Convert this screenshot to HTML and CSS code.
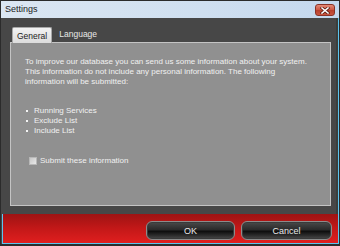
FILE: index.html
```html
<!DOCTYPE html>
<html>
<head>
<meta charset="utf-8">
<link rel="stylesheet" href="styles.css">
</head>
<body>
<div class="window">
  <div class="titlebar">
    <span class="title">Settings</span>
    <button class="close" aria-label="Close">
      <svg width="10" height="7" viewBox="0 0 10 7"><path d="M2 1 L8 6 M8 1 L2 6" stroke="#5a1a10" stroke-width="3" stroke-linecap="square"/><path d="M2 1 L8 6 M8 1 L2 6" stroke="#ffffff" stroke-width="1.6" stroke-linecap="square"/></svg>
    </button>
  </div>
  <div class="main">
    <div class="tabs">
      <div class="tab active">General</div>
      <div class="tab">Language</div>
    </div>
    <div class="panel">
      <p class="intro">To improve our database you can send us some information about your system. This information do not include any personal information. The following information will be submitted:</p>
      <ul class="items">
        <li>Running Services</li>
        <li>Exclude List</li>
        <li>Include List</li>
      </ul>
      <label class="check"><span class="box"></span>Submit these information</label>
    </div>
  </div>
  <div class="footer">
    <button class="btn ok">OK</button>
    <button class="btn cancel">Cancel</button>
  </div>
</div>
</body>
</html>
```
FILE: styles.css
```css
html, body {
  margin: 0;
  padding: 0;
  background: #2b2b2b;
}
.window {
  width: 340px;
  height: 246px;
  box-sizing: border-box;
  border: 1px solid #2b2b2b;
  border-bottom-width: 2px;
  background: #474747;
  display: flex;
  flex-direction: column;
  font-family: "Liberation Sans", Arial, sans-serif;
}
.titlebar {
  height: 17px;
  flex: none;
  display: flex;
  align-items: center;
  justify-content: space-between;
  background: linear-gradient(to right, #dbe6f2 0%, #cfdff0 60%, #c4d8ee 100%);
  border-bottom: 0;
}
.title {
  font-size: 9px;
  color: #1c1c1c;
  padding-left: 4px;
  line-height: 17px;
}
.close {
  width: 20px;
  height: 12px;
  margin-right: 4px;
  margin-top: 1px;
  padding: 0;
  border: 1px solid #8a3226;
  border-radius: 3px;
  background: linear-gradient(to bottom, #e38a78 0%, #cf5a45 45%, #b8402d 55%, #c8553f 100%);
  display: flex;
  align-items: center;
  justify-content: center;
  box-sizing: border-box;
}
.close svg { display: block; }
.main {
  height: 196px;
  flex: none;
  box-sizing: border-box;
  padding: 9px 7px 8px 9px;
  border-right: 1px solid #5cc3ee;
  display: flex;
  flex-direction: column;
  box-shadow: inset -2px 0 0 #3b3e3b;
}
.tabs {
  display: flex;
  height: 15px;
  flex: none;
  padding-left: 2px;
  align-items: stretch;
}
.tab {
  font-size: 8.5px;
  line-height: 15px;
  color: #e8e8e8;
  padding: 0 4px;
}
.tab.active {
  color: #222;
  background: linear-gradient(to bottom, #f2f2f2 0%, #dcdcdc 100%);
  border: 1px solid #a8a8a8;
  border-bottom: 0;
  border-radius: 2px 2px 0 0;
  line-height: 16px;
  margin-bottom: -1px;
  position: relative;
  z-index: 1;
  margin-right: 3px;
}
.panel {
  flex: 1;
  background: #909090;
  border: 1px solid #c4c4c4;
  box-sizing: border-box;
  padding: 14px 14px 0 14px;
  color: #f0f0f0;
  font-size: 8px;
  line-height: 10px;
}
.intro {
  margin: 0;
  width: 290px;
}
.items {
  list-style: none;
  margin: 19px 0 0 0;
  padding: 0;
}
.items li {
  display: flex;
  align-items: center;
  height: 10px;
}
.items li::before {
  content: "";
  width: 2px;
  height: 2px;
  background: #f4f4f4;
  margin-left: 1px;
  margin-right: 6px;
}
.check {
  display: flex;
  align-items: center;
  margin-top: 20px;
  height: 10px;
}
.box {
  width: 8px;
  height: 8px;
  box-sizing: border-box;
  border: 1px solid #b8b8b8;
  background: linear-gradient(135deg, #c8c8c8, #e8e8e8);
  margin-left: 4px;
  margin-right: 3px;
}
.footer {
  flex: 1;
  margin-left: 1px;
  border-left: 1px solid #5cc3ee;
  border-right: 1px solid #5cc3ee;
  border-bottom: 1px solid #5cc3ee;
  background: linear-gradient(to bottom, #9e1313 0%, #c31818 50%, #e01f1f 100%);
  display: flex;
  justify-content: flex-end;
  align-items: flex-start;
  gap: 6px;
  padding: 7px 6px 0 0;
}
.btn {
  height: 19px;
  box-sizing: border-box;
  border: 1px solid #8c8c8c;
  border-radius: 6px;
  background: linear-gradient(to bottom, #4a4a4a 0%, #2a2a2a 45%, #0e0e0e 55%, #2e2e2e 80%, #4a4a4a 100%);
  box-shadow: inset 0 0 0 1px #3a3a3a;
  color: #ececec;
  font-family: "Liberation Sans", Arial, sans-serif;
  font-size: 9px;
  padding: 0;
}
.ok { width: 89px; }
.cancel { width: 91px; }
```
